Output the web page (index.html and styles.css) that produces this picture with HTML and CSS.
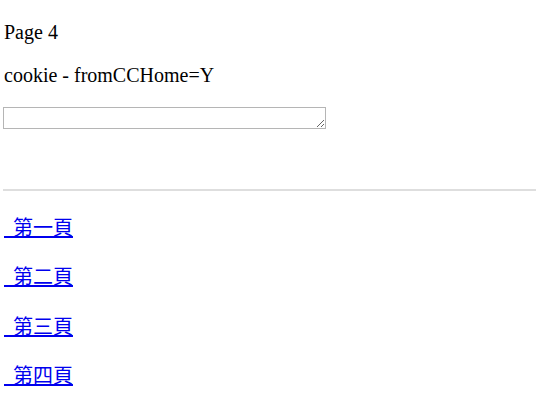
FILE: index.html
```html
<!DOCTYPE html>
<html>
<head>
<meta charset="utf-8">
<link rel="stylesheet" href="styles.css">
</head>
<body>
<p class="line">Page 4</p>
<p class="line">cookie - fromCCHome=Y</p>
<textarea class="box"></textarea>
<hr class="rule">
<p class="nav"><a href="#">&nbsp; 第一頁</a></p>
<p class="nav"><a href="#">&nbsp; 第二頁</a></p>
<p class="nav"><a href="#">&nbsp; 第三頁</a></p>
<p class="nav"><a href="#">&nbsp; 第四頁</a></p>
</body>
</html>
```
FILE: styles.css
```css
html, body {
  background: #fff;
}
body {
  margin: 0 4px 0 3px;
  padding-top: 1px;
  font-family: "Liberation Serif", "Noto Sans CJK TC", serif;
  font-size: 20px;
  color: #000;
}
.line {
  margin: 20px 0 20px 1px;
}
.box {
  display: block;
  box-sizing: border-box;
  width: 323px;
  height: 22px;
  margin: 0;
  border: 1px solid #b5b5b5;
  padding: 0;
  resize: both;
}
.rule {
  margin: 60px 0 21px;
  border: 0;
  border-top: 2px solid #dedede;
  height: 0;
}
.nav {
  margin: 20px 0 20px 1px;
  line-height: 29.3px;
  font-family: "Noto Sans CJK TC", sans-serif;
}
.nav a {
  color: #0000ee;
  text-decoration: underline;
}
```
